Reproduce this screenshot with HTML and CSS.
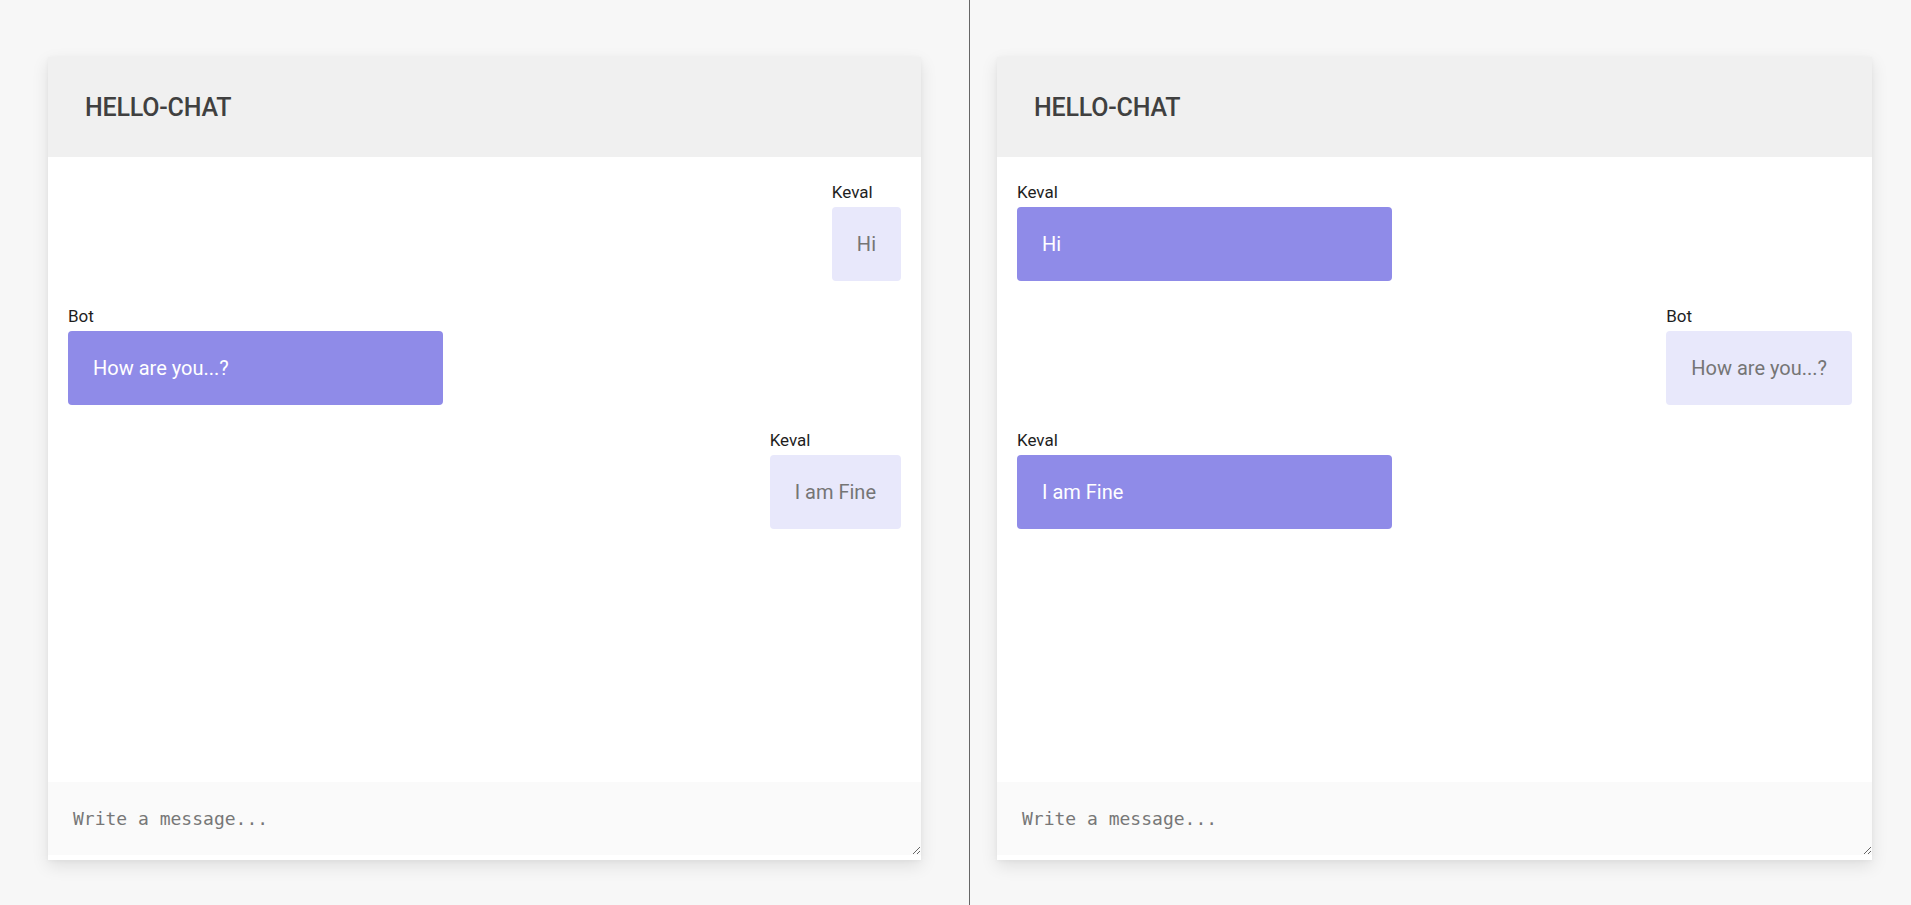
FILE: index.html
```html
<!DOCTYPE html>
<html lang="en">
<head>
<meta charset="utf-8">
<title>Hello Chat</title>
<link rel="stylesheet" href="styles.css">
</head>
<body>
<div class="split">
  <section class="pane pane-left">
    <div class="card">
      <header class="card-header"><h1 class="title">HELLO-CHAT</h1></header>
      <div class="messages">
        <div class="msg msg-right">
          <div class="name">Keval</div>
          <div class="bubble bubble-light">Hi</div>
        </div>
        <div class="msg msg-left">
          <div class="name">Bot</div>
          <div class="bubble bubble-purple">How are you...?</div>
        </div>
        <div class="msg msg-right">
          <div class="name">Keval</div>
          <div class="bubble bubble-light">I am Fine</div>
        </div>
      </div>
      <textarea class="composer" placeholder="Write a message..." autofocus></textarea>
    </div>
  </section>
  <div class="divider"></div>
  <section class="pane pane-right">
    <div class="card">
      <header class="card-header"><h1 class="title">HELLO-CHAT</h1></header>
      <div class="messages">
        <div class="msg msg-left">
          <div class="name">Keval</div>
          <div class="bubble bubble-purple">Hi</div>
        </div>
        <div class="msg msg-right">
          <div class="name">Bot</div>
          <div class="bubble bubble-light">How are you...?</div>
        </div>
        <div class="msg msg-left">
          <div class="name">Keval</div>
          <div class="bubble bubble-purple">I am Fine</div>
        </div>
      </div>
      <textarea class="composer" placeholder="Write a message..."></textarea>
    </div>
  </section>
</div>
</body>
</html>
```

FILE: styles.css
```css
* { box-sizing: border-box; }
html, body {
  margin: 0;
  padding: 0;
  height: 100%;
  background: #f7f7f7;
  font-family: Roboto, "Liberation Sans", Arial, sans-serif;
  overflow: hidden;
}
.split {
  display: flex;
  height: 905px;
}
.pane {
  padding-top: 57px;
}
.pane-left {
  width: 969px;
  padding-left: 48px;
}
.pane-right {
  flex: 1;
  padding-left: 27px;
}
.divider {
  width: 1px;
  background: #666;
  height: 100%;
}
.pane-left .card { width: 873px; }
.pane-right .card { width: 875px; }
.card {
  display: flex;
  flex-direction: column;
  height: 803px;
  background: #fff;
  box-shadow: 0 6px 16px rgba(0, 0, 0, 0.10), 0 1px 4px rgba(0, 0, 0, 0.04);
  padding-bottom: 5px;
}
.card-header {
  height: 100px;
  background: #f0f0f0;
  display: flex;
  align-items: center;
  padding-left: 37px;
  padding-top: 1px;
}
.title {
  margin: 0;
  font-size: 25px;
  font-weight: 500;
  color: #404040;
  letter-spacing: -0.2px;
}
.messages {
  flex: 1;
  padding: 26px 20px 0;
  display: flex;
  flex-direction: column;
}
.msg {
  display: flex;
  flex-direction: column;
  align-items: flex-start;
  margin-bottom: 26px;
}
.msg-right { align-self: flex-end; }
.msg-left { align-self: flex-start; }
.name {
  font-size: 17px;
  line-height: 19px;
  font-weight: 400;
  color: #1e1e1e;
  margin-bottom: 5px;
}
.bubble {
  font-size: 20px;
  line-height: 24px;
  padding: 25px 25px;
  border-radius: 4px;
  height: 74px;
}
.bubble-light {
  background: #e8e8fb;
  color: #757575;
}
.bubble-purple {
  background: #8f8be8;
  color: #fff;
  width: 375px;
}
.composer {
  display: block;
  width: 100%;
  height: 73px;
  border: none;
  outline: none;
  background: #fafafa;
  padding: 26px 25px 0;
  font-family: "DejaVu Sans Mono", "Liberation Mono", monospace;
  font-size: 18px;
  line-height: 21px;
  color: #333;
  margin: 0;
}
.composer::placeholder {
  color: #777;
}
```
